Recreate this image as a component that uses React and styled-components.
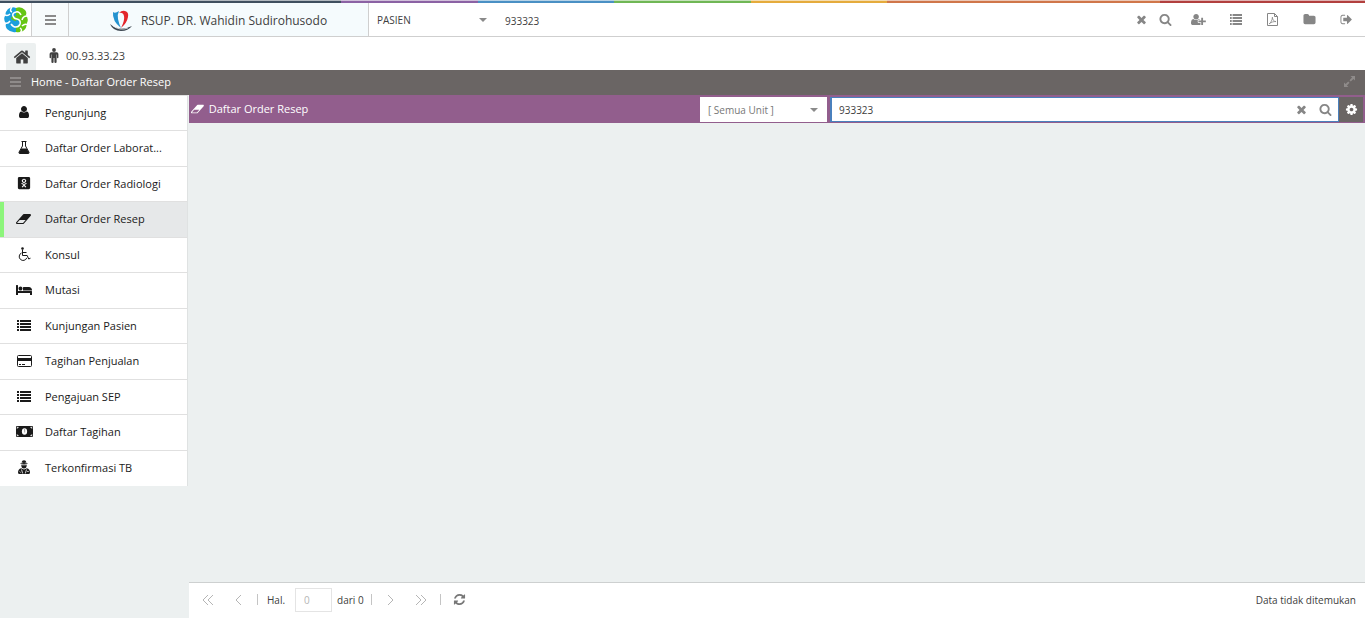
import React, { useState } from 'react'
import styled, { createGlobalStyle } from 'styled-components'
import { FaOdnoklassnikiSquare } from 'react-icons/fa'

const App = () => {
  const [active, setActive] = useState('Daftar Order Resep')

  return (
    <Page>
      <GlobalStyle />
      <Stripe />
      <Header>
        <LogoCell href="#" aria-label="SIMRS">
          <Logo />
        </LogoCell>
        <MenuButton aria-label="Menu">
          <BarsIcon size={13} />
        </MenuButton>
        <Brand>
          <HospitalLogo />
          RSUP. DR. Wahidin Sudirohusodo
        </Brand>
        <SelectBox width="122px">
          <Select aria-label="Kategori" defaultValue="PASIEN">
            <option>PASIEN</option>
          </Select>
          <Caret />
        </SelectBox>
        <HeaderInput aria-label="Cari pasien" defaultValue="933323" />
        <HeaderTools>
          <SearchTools>
            <IconButton width="24px" aria-label="Hapus">
              <Icon d={paths.times} size={13} />
            </IconButton>
            <IconButton width="24px" aria-label="Cari">
              <Icon d={paths.search} size={13} />
            </IconButton>
          </SearchTools>
          {tools.map(tool => (
            <IconButton key={tool.label} width="37px" aria-label={tool.label}>
              {tool.icon}
            </IconButton>
          ))}
        </HeaderTools>
      </Header>

      <Tabs>
        <HomeTab href="#" aria-label="Home">
          <Icon d={paths.home} size={18} />
        </HomeTab>
        <PatientTab href="#">
          <MaleIcon />
          00.93.33.23
        </PatientTab>
      </Tabs>

      <TitleBar>
        <BarsIcon size={13} />
        <Title>Home - Daftar Order Resep</Title>
        <ExpandButton aria-label="Perbesar">
          <ExpandIcon />
        </ExpandButton>
      </TitleBar>

      <Body>
        <Sidebar>
          <Menu>
            {menu.map(item => (
              <MenuItem key={item.label}>
                <MenuLink
                  href="#"
                  $active={item.label === active}
                  onClick={() => setActive(item.label)}
                >
                  <MenuIcon>{item.icon}</MenuIcon>
                  <MenuText>{item.label}</MenuText>
                </MenuLink>
              </MenuItem>
            ))}
          </Menu>
        </Sidebar>

        <Main>
          <PanelHeader>
            <PanelTitle>
              <Icon d={paths.eraser} size={12} box="0 0 2048 1792" />
              Daftar Order Resep
            </PanelTitle>
            <UnitBox width="127px">
              <Select aria-label="Unit" defaultValue="[ Semua Unit ]" $muted>
                <option>[ Semua Unit ]</option>
              </Select>
              <Caret />
            </UnitBox>
            <SearchBox>
              <SearchInput aria-label="Cari resep" defaultValue="933323" />
              <IconButton width="24px" aria-label="Hapus pencarian">
                <Icon d={paths.times} size={13} />
              </IconButton>
              <IconButton width="24px" aria-label="Cari resep">
                <Icon d={paths.search} size={13} />
              </IconButton>
            </SearchBox>
            <SettingsButton aria-label="Pengaturan">
              <Icon d={paths.cog} size={13} />
            </SettingsButton>
          </PanelHeader>

          <Content />

          <Pager>
            <PagerButton aria-label="Halaman pertama">
              <Chevrons d="M6 1L1 6l5 5M11 1L6 6l5 5" />
            </PagerButton>
            <PagerButton aria-label="Sebelumnya">
              <Chevrons d="M8 1L3 6l5 5" />
            </PagerButton>
            <Separator />
            <PageLabel htmlFor="page">Hal.</PageLabel>
            <PageInput id="page" defaultValue="0" />
            <PageTotal>dari 0</PageTotal>
            <Separator />
            <PagerButton aria-label="Berikutnya">
              <Chevrons d="M4 1l5 5-5 5" />
            </PagerButton>
            <PagerButton aria-label="Halaman terakhir">
              <Chevrons d="M1 1l5 5-5 5M6 1l5 5-5 5" />
            </PagerButton>
            <Separator />
            <PagerButton aria-label="Muat ulang" $dark>
              <Icon d={paths.refresh} size={13} />
            </PagerButton>
            <Status>Data tidak ditemukan</Status>
          </Pager>
        </Main>
      </Body>
    </Page>
  )
}

export default App

const paths = {
  times:
    'M1490 1322q0 40-28 68l-136 136q-28 28-68 28t-68-28l-294-294-294 294q-28 28-68 28t-68-28l-136-136q-28-28-28-68t28-68l294-294-294-294q-28-28-28-68t28-68l136-136q28-28 68-28t68 28l294 294 294-294q28-28 68-28t68 28l136 136q28 28 28 68t-28 68l-294 294 294 294q28 28 28 68z',
  search:
    'M1216 832q0-185-131.5-316.5t-316.5-131.5-316.5 131.5-131.5 316.5 131.5 316.5 316.5 131.5 316.5-131.5 131.5-316.5zm512 832q0 52-38 90t-90 38q-54 0-90-38l-343-342q-179 124-399 124-143 0-273.5-55.5t-225-150-150-225-55.5-273.5 55.5-273.5 150-225 225-150 273.5-55.5 273.5 55.5 225 150 150 225 55.5 273.5q0 220-124 399l343 343q37 37 37 90z',
  user:
    'M1536 1399q0 109-62.5 187t-150.5 78h-854q-88 0-150.5-78t-62.5-187q0-85 8.5-160.5t31.5-152 58.5-131 94-89 134.5-34.5q131 128 313 128t313-128q76 0 134.5 34.5t94 89 58.5 131 31.5 152 8.5 160.5zm-256-887q0 159-112.5 271.5t-271.5 112.5-271.5-112.5-112.5-271.5 112.5-271.5 271.5-112.5 271.5 112.5 112.5 271.5z',
  userPlus:
    'M704 896q-159 0-271.5-112.5t-112.5-271.5 112.5-271.5 271.5-112.5 271.5 112.5 112.5 271.5-112.5 271.5-271.5 112.5zm960 128h352q13 0 22.5 9.5t9.5 22.5v192q0 13-9.5 22.5t-22.5 9.5h-352v352q0 13-9.5 22.5t-22.5 9.5h-192q-13 0-22.5-9.5t-9.5-22.5v-352h-352q-13 0-22.5-9.5t-9.5-22.5v-192q0-13 9.5-22.5t22.5-9.5h352v-352q0-13 9.5-22.5t22.5-9.5h192q13 0 22.5 9.5t9.5 22.5v352zm-736 224q0 52 38 90t90 38h256v238q-68 50-171 50h-874q-121 0-194-69t-73-190q0-53 3.5-103.5t14-109 26.5-108.5 43-97.5 62-81 85.5-53.5 111.5-20q19 0 39 17 79 61 154.5 91.5t164.5 30.5 164.5-30.5 154.5-91.5q20-17 39-17 132 0 217 96h-223q-52 0-90 38t-38 90v192z',
  eraser:
    'M896 1408l336-384h-768l-336 384h768zm1013-1077q15 34 9.5 71.5t-30.5 65.5l-896 1024q-38 44-96 44h-768q-38 0-69.5-20.5t-47.5-54.5q-15-34-9.5-71.5t30.5-65.5l896-1024q38-44 96-44h768q38 0 69.5 20.5t47.5 54.5z',
  folder:
    'M1728 608v704q0 92-66 158t-158 66h-1216q-92 0-158-66t-66-158v-960q0-92 66-158t158-66h320q92 0 158 66t66 158v32h672q92 0 158 66t66 158z',
  signOut:
    'M704 1440q0 4 1 20t.5 26.5-3 23.5-10 19.5-20.5 6.5h-320q-119 0-203.5-84.5t-84.5-203.5v-704q0-119 84.5-203.5t203.5-84.5h320q13 0 22.5 9.5t9.5 22.5q0 4 1 20t.5 26.5-3 23.5-10 19.5-20.5 6.5h-320q-66 0-113 47t-47 113v704q0 66 47 113t113 47h312l11.5 1 11.5 3 8 5.5 7 9 2 13.5zm928-544q0 26-19 45l-544 544q-19 19-45 19t-45-19-19-45v-288h-448q-26 0-45-19t-19-45v-384q0-26 19-45t45-19h448v-288q0-26 19-45t45-19 45 19l544 544q19 19 19 45z',
  cog:
    'M1152 896q0-106-75-181t-181-75-181 75-75 181 75 181 181 75 181-75 75-181zm512-109v222q0 12-8 23t-20 13l-185 28q-19 54-39 91 35 50 107 138 10 12 10 25t-9 23q-27 37-99 108t-94 71q-12 0-26-9l-138-108q-44 23-91 38-16 136-29 186-7 28-36 28h-222q-14 0-24.5-8.5t-11.5-21.5l-28-184q-49-16-90-37l-141 107q-10 9-25 9-14 0-25-11-126-114-165-168-7-10-7-23 0-12 8-23 15-21 51-66.5t54-70.5q-27-50-41-99l-183-27q-13-2-21-12.5t-8-23.5v-222q0-12 8-23t19-13l186-28q14-46 39-92-40-57-107-138-10-12-10-24 0-10 9-23 26-36 98.5-107.5t94.5-71.5q13 0 26 10l138 107q44-23 91-38 16-136 29-186 7-28 36-28h222q14 0 24.5 8.5t11.5 21.5l28 184q49 16 90 37l142-107q9-9 24-9 13 0 25 10 129 119 165 170 7 8 7 22 0 12-8 23-15 21-51 66.5t-54 70.5q26 50 41 98l183 28q13 2 21 12.5t8 23.5z',
  refresh:
    'M1639 1056q0 5-1 7-64 268-268 434.5t-478 166.5q-146 0-282.5-55t-243.5-157l-129 129q-19 19-45 19t-45-19-19-45v-448q0-26 19-45t45-19h448q26 0 45 19t19 45-19 45l-137 137q71 66 161 102t187 36q134 0 250-65t186-179q11-17 53-117 8-23 30-23h192q13 0 22.5 9.5t9.5 22.5zm25-800v448q0 26-19 45t-45 19h-448q-26 0-45-19t-19-45 19-45l138-138q-148-137-349-137-134 0-250 65t-186 179q-11 17-53 117-8 23-30 23h-199q-13 0-22.5-9.5t-9.5-22.5v-7q65-268 270-434.5t480-166.5q146 0 284 55.5t245 156.5l130-129q19-19 45-19t45 19 19 45z',
  home:
    'M1472 992v480q0 26-19 45t-45 19h-384v-384h-256v384h-384q-26 0-45-19t-19-45v-480q0-1 .5-3t.5-3l575-474 575 474q1 2 1 6zm223-69l-62 74q-8 9-21 11h-3q-13 0-21-7l-692-577-692 577q-12 8-24 7-13-2-21-11l-62-74q-8-10-7-23.5t11-21.5l719-599q32-26 76-26t76 26l244 204v-195q0-14 9-23t23-9h192q14 0 23 9t9 23v408l219 182q10 8 11 21.5t-7 23.5z',
  bed:
    'M256 1024h1728q26 0 45 19t19 45v448h-256v-256h-1536v256h-256v-1216q0-26 19-45t45-19h128q26 0 45 19t19 45v704zm576-320q0-106-75-181t-181-75-181 75-75 181 75 181 181 75 181-75 75-181zm1216 256v-64q0-159-112.5-271.5t-271.5-112.5h-704q-26 0-45 19t-19 45v384h1152z',
}

const Icon = ({ d, size, box = '0 0 1792 1792' }) => (
  <svg height={size} viewBox={box} fill="currentColor" aria-hidden="true">
    <path d={d} />
  </svg>
)

const BarsIcon = ({ size }) => (
  <svg width={size} height={size} viewBox="0 0 13 13" fill="currentColor">
    <path d="M1 2h11v2H1zM1 6h11v2H1zM1 10h11v2H1z" />
  </svg>
)

const ListIcon = ({ width = 14 }) => (
  <svg width={width} height="11" viewBox="0 0 14 11" preserveAspectRatio="none" fill="currentColor">
    <path d="M0 0h2v2H0zM3 0h11v2H3zM0 3h2v2H0zM3 3h11v2H3zM0 6h2v2H0zM3 6h11v2H3zM0 9h2v2H0zM3 9h11v2H3z" />
  </svg>
)

const MaleIcon = () => (
  <svg width="10" height="15" viewBox="0 0 10 15" fill="currentColor">
    <circle cx="5" cy="2" r="1.900" />
    <path d="M2.400 4.300h5.200Q9.400 4.300 9.400 6v3.400q0 .8-.7.8T8 9.400V6.500h-.4v7.600q0 .9-1.100.9t-1.100-.9V10h-.8v4.100q0 .9-1.100.9t-1.100-.9V6.500H2v2.900q0 .8-.7.8t-.7-.8V6q0-1.700 1.800-1.700z" />
  </svg>
)

const PdfIcon = () => (
  <svg width="11" height="13" viewBox="0 0 11 13" fill="none" stroke="currentColor">
    <path d="M.5.5h7l3 3v9H.5zM7.5.5v3h3" />
    <path d="M2.2 10.8c1.500-.8 3.200-4 3.200-6.600 0 2.600 1.600 4.300 3.600 4.400-2.200-.2-4.600.4-6.800 2.200z" strokeWidth=".8" />
  </svg>
)

const ExpandIcon = () => (
  <svg width="11" height="11" viewBox="0 0 11 11" fill="currentColor">
    <path d="M6.500 0H11v4.500L9.400 2.900 6.800 5.500l-1.300-1.300 2.600-2.600zM4.500 11H0V6.500l1.600 1.600 2.600-2.600 1.300 1.300-2.600 2.600z" />
  </svg>
)

const FlaskIcon = () => (
  <svg width="12" height="13" viewBox="0 0 12 13">
    <path d="M3.500.5h5M4.500.5V5L1 11.200q-.4 1.300.8 1.300h8.400q1.200 0 .8-1.300L7.500 5V.5" fill="none" stroke="currentColor" />
    <path d="M3.300 7.500h5.400l2.300 4q0 1-1 1H2q-1 0-1-1z" fill="currentColor" />
  </svg>
)

const WheelchairIcon = () => (
  <svg width="13" height="14" viewBox="0 0 13 14" fill="none" stroke="currentColor">
    <circle cx="4.500" cy="1.500" r="1.300" fill="currentColor" stroke="none" />
    <path d="M4.500 2.500v6h4.700l1.500 3.500 1.800-.8M4.500 5.500h4M3.500 6A3.900 3.900 0 1 0 8.800 10.800" />
  </svg>
)

const CardIcon = () => (
  <svg width="15" height="12" viewBox="0 0 15 12">
    <rect x=".5" y=".5" width="14" height="11" rx="1" fill="none" stroke="currentColor" />
    <path d="M0 3h15v3H0zM2 9h2v1H2zM5 9h3v1H5z" fill="currentColor" />
  </svg>
)

const MoneyIcon = () => (
  <svg width="17" height="11" viewBox="0 0 17 11">
    <rect width="17" height="11" rx="1" fill="currentColor" />
    <ellipse cx="8.500" cy="5.500" rx="2.600" ry="3.300" fill="#fff" />
    <path d="M1.200 1.200h1.200L1.200 2.400zM15.800 1.200h-1.200l1.200 1.200zM1.200 9.800h1.200L1.200 8.600zM15.800 9.800h-1.200l1.200-1.200z" fill="#fff" stroke="#fff" strokeWidth=".6" />
    <path d="M8 4l.7-.5v3" fill="none" stroke="currentColor" strokeWidth=".4" />
  </svg>
)

const AgentIcon = () => (
  <svg width="12" height="14" viewBox="0 0 12 14" fill="currentColor">
    <path d="M3.500 2.500Q4 .3 6 .3t2.500 2.200L6 3zM2 3.500q4-1 8 0Q9.500 4.500 6 4.500t-4-1z" />
    <path d="M3.300 5q2.700.7 5.400 0 0 3.500-2.700 3.500T3.300 5z" />
    <path d="M3.200 8.300Q6 10.500 8.800 8.300 12 9 12 12.500q0 1.500-1.500 1.500h-9Q0 14 0 12.500 0 9 3.200 8.300z" />
    <path d="M3.500 9.500l1.200 4M8.500 9.500l-1.200 4M9.200 11.500h1.500M1.700 11.500l.8 1" stroke="#fff" strokeWidth=".8" />
  </svg>
)

const Chevrons = ({ d }) => (
  <svg width="12" height="12" viewBox="0 0 12 12" fill="none" stroke="currentColor">
    <path d={d} />
  </svg>
)

const Logo = () => (
  <svg width="24" height="26" viewBox="0 0 24 26" fill="none">
    <path d="M4 2q4-3 8-1v24q-5 1-9-3-2-3-1-5-3-5-1-8 0-4 3-7z" fill="#1c9fdc" />
    <path d="M12 1q5-2 9 2 2 2 1 5 3 4 1 8 0 5-4 8-4 2-7 1z" fill="#66c514" />
    <path d="M12 9q-4-1-5 2 0 2 5 3z" fill="#66c514" />
    <path d="M12 13q5 0 5 3 0 2-5 3z" fill="#1c9fdc" />
    <path
      d="M17 8q-2-4-5-3-4 1-3 4 1 3 4 3 4 1 3 5-1 3-4 3-3 0-5-3M0 7q3 3 6 0M8 0q-3 4 0 5M24 18q-3-2-6 1M16 26q3-3 0-5M1 16q3 1 5-2M23 9q-4 0-5 4"
      stroke="#fff"
      strokeWidth="1.500"
    />
  </svg>
)

const HospitalLogo = () => (
  <svg width="22" height="22" viewBox="0 0 22 22" fill="none">
    <path d="M11 18Q2 11 3 2q2 2 6-1-2 4-1 8 1 5 3 9z" fill="#2492cf" />
    <path d="M9 3q3-3 6-2 4 1 3 6-1 6-7 11 4-8 3-12-1-4-5-3z" fill="#e3262b" />
    <path d="M0 14q9 8 22 2-4 5-11 5-8 0-11-7z" fill="#3c4650" />
    <path d="M3 16q7 5 15 2" stroke="#fff" strokeWidth=".7" />
  </svg>
)

const tools = [
  {
    label: 'Tambah pasien',
    icon: <Icon d={paths.userPlus} size={13} box="0 0 2048 1792" />,
  },
  { label: 'Daftar', icon: <ListIcon width={12} /> },
  { label: 'PDF', icon: <PdfIcon /> },
  { label: 'Berkas', icon: <Icon d={paths.folder} size={13} /> },
  { label: 'Keluar', icon: <Icon d={paths.signOut} size={13} /> },
]

const menu = [
  { label: 'Pengunjung', icon: <Icon d={paths.user} size={14} /> },
  { label: 'Daftar Order Laborat...', icon: <FlaskIcon /> },
  { label: 'Daftar Order Radiologi', icon: <FaOdnoklassnikiSquare size={14} /> },
  {
    label: 'Daftar Order Resep',
    icon: <Icon d={paths.eraser} size={14} box="0 0 2048 1792" />,
  },
  { label: 'Konsul', icon: <WheelchairIcon /> },
  {
    label: 'Mutasi',
    icon: <Icon d={paths.bed} size={14} box="0 0 2048 1792" />,
  },
  { label: 'Kunjungan Pasien', icon: <ListIcon /> },
  { label: 'Tagihan Penjualan', icon: <CardIcon /> },
  { label: 'Pengajuan SEP', icon: <ListIcon /> },
  { label: 'Daftar Tagihan', icon: <MoneyIcon /> },
  { label: 'Terkonfirmasi TB', icon: <AgentIcon /> },
]

const GlobalStyle = createGlobalStyle`
  * {
    box-sizing: border-box;
  }
  body {
    margin: 0;
    background: #fff;
    color: #404040;
    font-family: 'Open Sans', 'Liberation Sans', sans-serif;
    font-size: 11px;
  }
  button, input, select {
    margin: 0;
    padding: 0;
    border: 0;
    border-radius: 0;
    background: transparent;
    color: inherit;
    font-family: inherit;
    font-size: 10px;
    outline: none;
  }
  a {
    color: inherit;
    text-decoration: none;
  }
  svg {
    display: block;
    flex: none;
  }
`

const Page = styled.div`
  display: flex;
  flex-direction: column;
  min-height: 100vh;
  padding-bottom: 3px;
`

const Stripe = styled.div`
  height: 3px;
  background:
    linear-gradient(rgba(255, 255, 255, 0.6) 1px, transparent 1px),
    linear-gradient(
      90deg,
      #3f4f5f 25%,
      #8b62a4 25% 35%,
      #4a90c4 35% 45%,
      #70b755 45% 55%,
      #e5ab3c 55% 65%,
      #d0764a 65% 85%,
      #b2403e 85%
    );
`

const Header = styled.header`
  display: flex;
  height: 34px;
  border-bottom: 1px solid #cfcfcf;
`

const LogoCell = styled.a`
  display: flex;
  align-items: center;
  justify-content: center;
  width: 32px;
  border-right: 1px solid #cfcfcf;
`

const MenuButton = styled.button`
  display: flex;
  align-items: center;
  justify-content: center;
  width: 37px;
  border-right: 1px solid #cfcfcf;
  background: #f7fbfc;
  color: #8a8a8a;
`

const Brand = styled.div`
  display: flex;
  align-items: center;
  justify-content: center;
  gap: 9px;
  width: 300px;
  padding-top: 2px;
  border-right: 1px solid #cfcfcf;
  background: #f5fbfd;
  font-size: 12px;
`

const SelectBox = styled.div`
  display: flex;
  align-items: center;
  width: ${props => props.width};
  padding: 0 4px 0 8px;
`

const Select = styled.select`
  flex: 1;
  min-width: 0;
  height: 100%;
  appearance: none;
  color: ${props => (props.$muted ? '#777' : '#404040')};
`

const Caret = styled.span`
  border: 4px solid transparent;
  border-top-color: #8a8a8a;
  border-bottom: 0;
`

const HeaderInput = styled.input`
  flex: 1;
  min-width: 0;
  padding: 2px 0 0 14px;
`

const HeaderTools = styled.div`
  display: flex;
`

const SearchTools = styled.div`
  display: flex;
  margin-right: 3px;
`

const IconButton = styled.button`
  display: flex;
  align-items: center;
  justify-content: center;
  width: ${props => props.width};
  color: #868686;
  cursor: pointer;
`

const Tabs = styled.nav`
  display: flex;
  align-items: flex-end;
  height: 33px;
  padding-left: 6px;
`

const HomeTab = styled.a`
  display: flex;
  align-items: center;
  justify-content: center;
  width: 30px;
  height: 27px;
  padding-left: 2px;
  border-radius: 2px 2px 0 0;
  background: #ecf0f0;
`

const PatientTab = styled.a`
  display: flex;
  align-items: center;
  gap: 7px;
  height: 27px;
  padding: 0 0 2px 13px;
`

const TitleBar = styled.div`
  display: flex;
  align-items: center;
  height: 25px;
  padding: 0 10px 2px 9px;
  background: #6a6564;
  color: #8f8b8a;
`

const Title = styled.h1`
  flex: 1;
  margin: 0;
  padding-left: 9px;
  color: #fff;
  font-size: 11px;
  font-weight: 400;
`

const ExpandButton = styled.button`
  color: #8f8b8a;
`

const Body = styled.div`
  display: flex;
  flex: 1;
  background: #ecf0f0;
`

const Sidebar = styled.aside`
  width: 189px;
  padding-right: 1px;
`

const Menu = styled.ul`
  margin: 0;
  padding: 0;
  border-top: 1px solid #e2e2e2;
  border-right: 1px solid #dfe2e2;
  background: #fff;
  list-style: none;
`

const MenuItem = styled.li`
  height: 35px;
  border-bottom: 1px solid #e0e0e0;

  &:nth-child(even) {
    height: 36px;
  }

  &:last-child {
    border-bottom-color: #fff;
  }
`

const MenuLink = styled.a`
  display: flex;
  align-items: center;
  height: 100%;
  padding: 0 24px 2px 0;
  border-left: 4px solid ${props => (props.$active ? '#8cf57b' : 'transparent')};
  background: ${props => (props.$active ? '#e6e8e9' : 'transparent')};
  color: #1a1a1a;
`

const MenuIcon = styled.span`
  display: flex;
  justify-content: center;
  width: 40px;
  margin-right: 1px;
`

const MenuText = styled.span`
  flex: 1;
  white-space: nowrap;
`

const Main = styled.main`
  display: flex;
  flex: 1;
  flex-direction: column;
  min-width: 0;
`

const PanelHeader = styled.div`
  display: flex;
  height: 28px;
  padding: 2px 2px 1px 2px;
  background: #925e8d;
  color: #fff;
`

const PanelTitle = styled.h2`
  display: flex;
  align-items: center;
  flex: 1;
  gap: 4px;
  margin: 0;
  padding-bottom: 2px;
  font-size: 11px;
  font-weight: 400;
`

const UnitBox = styled(SelectBox)`
  margin-right: 3px;
  padding-right: 9px;
  background: #fff;
`

const SearchBox = styled.div`
  display: flex;
  width: 509px;
  padding-right: 1px;
  border: 1px solid #4a80bd;
  border-left-width: 2px;
  background: #fff;
`

const SearchInput = styled.input`
  flex: 1;
  min-width: 0;
  padding-left: 7px;
  color: #404040;
`

const SettingsButton = styled.button`
  display: flex;
  align-items: center;
  justify-content: center;
  width: 24px;
  background: #6a6564;
`

const Content = styled.div`
  flex: 1;
`

const Pager = styled.footer`
  display: flex;
  align-items: center;
  height: 36px;
  padding: 0 9px 2px 3px;
  border-top: 1px solid #cdd0d0;
  background: #fff;
  font-size: 10px;
`

const PagerButton = styled.button`
  display: flex;
  align-items: center;
  justify-content: center;
  width: 31px;
  height: 24px;
  color: ${props => (props.$dark ? '#777' : '#b5b5b5')};
`

const Separator = styled.span`
  width: 1px;
  height: 11px;
  margin: 0 3px;
  background: #c4c4c4;
`

const PageLabel = styled.label`
  padding: 0 10px 0 6px;
`

const PageInput = styled.input`
  width: 37px;
  height: 24px;
  padding-left: 8px;
  border: 1px solid #e4e4e4;
  color: #b5b5b5;
`

const PageTotal = styled.span`
  padding: 0 4px 0 5px;
`

const Status = styled.span`
  margin-left: auto;
`
